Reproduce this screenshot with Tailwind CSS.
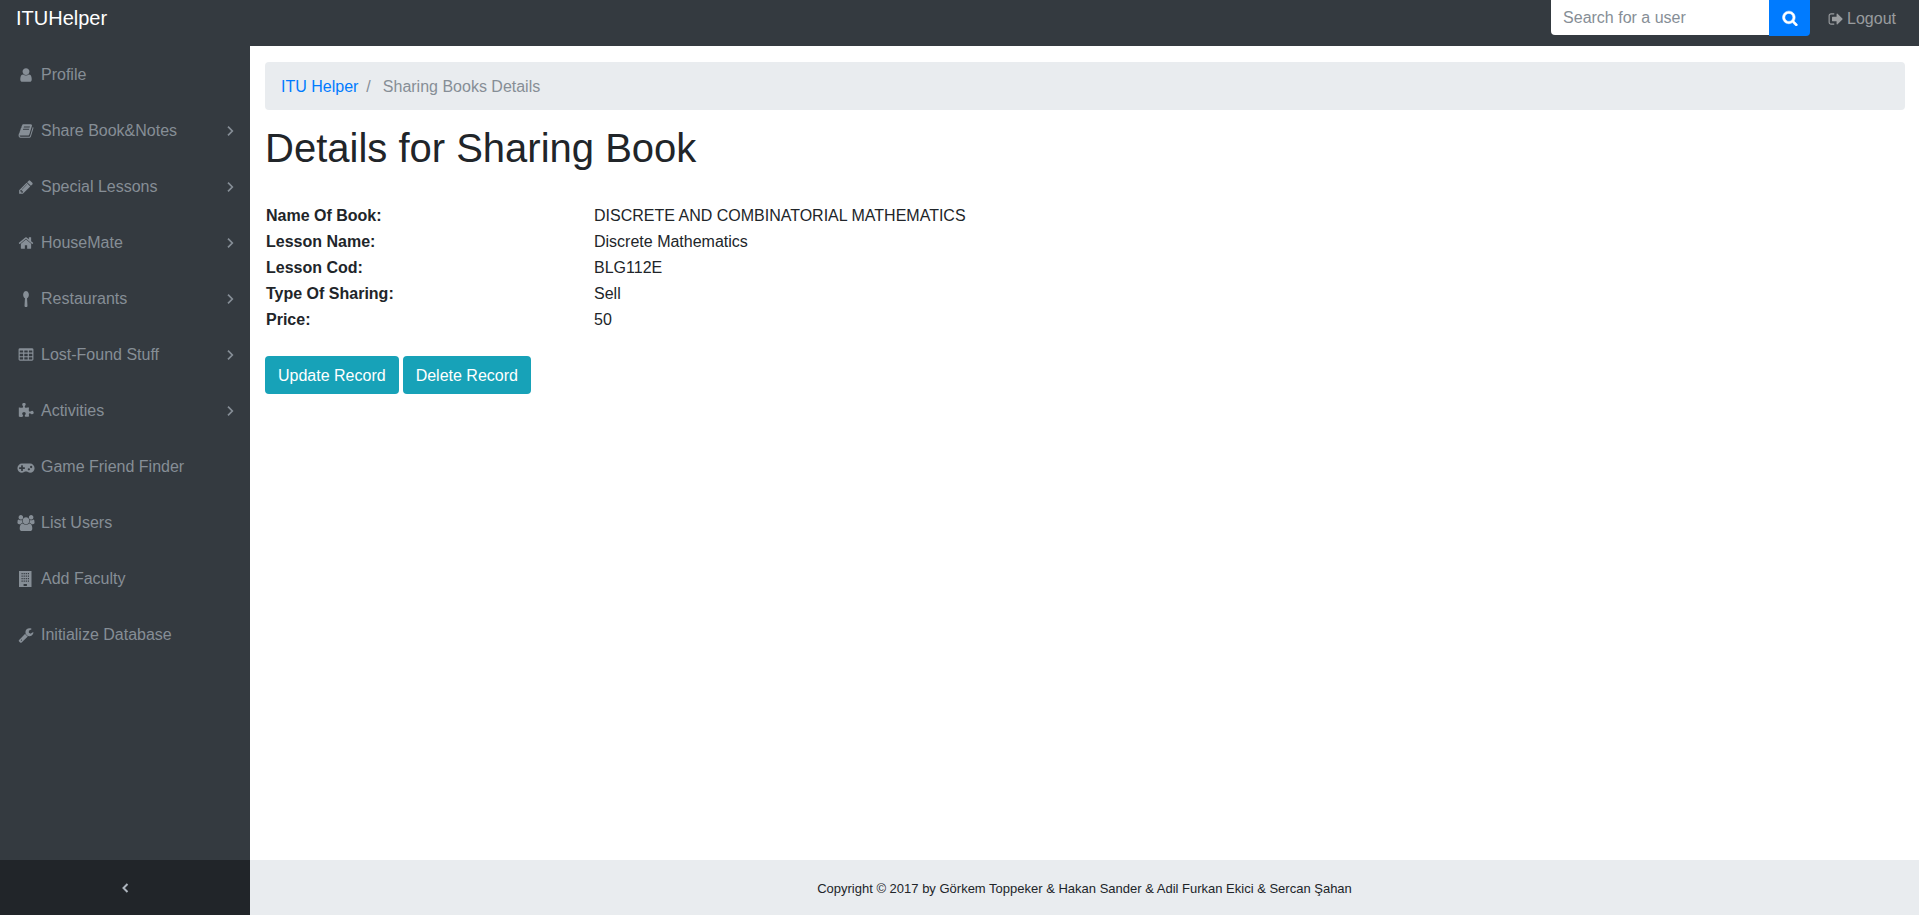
<!DOCTYPE html>
<html lang="en">
<head>
<meta charset="utf-8">
<title>ITUHelper</title>
<script src="https://cdn.jsdelivr.net/npm/@tailwindcss/browser@4"></script>
</head>
<body class="flex min-h-screen flex-col bg-white font-['Liberation_Sans',Arial,sans-serif] text-base text-[#212529]">
<svg class="hidden" aria-hidden="true">
  <symbol id="chev" viewBox="0 0 8 16"><path d="M2 3.700 6.300 8 2 12.300" fill="none" stroke="currentColor" stroke-width="1.700"/></symbol>
</svg>
<header class="flex h-[46px] items-start justify-between bg-[#343a40] pl-4 pr-[23px]">
  <a href="#" class="flex h-9 items-center text-xl text-white">ITUHelper</a>
  <div class="flex items-start">
    <form class="flex items-start">
      <label for="q" class="sr-only">Search for a user</label>
      <input id="q" type="text" placeholder="Search for a user" class="h-[35px] w-[218px] rounded-bl bg-white px-3 placeholder:text-[#868e96]">
      <button type="button" aria-label="Search" class="flex h-9 w-[41px] items-center justify-center rounded-br bg-[#007bff] text-white">
        <svg class="size-4" viewBox="0 0 1792 1792" fill="currentColor" stroke="currentColor" stroke-width="60"><path d="M1216 832q0-185-131.500-316.500t-316.500-131.500-316.500 131.500-131.500 316.500 131.500 316.500 316.500 131.500 316.500-131.500 131.500-316.500zm512 832q0 52-38 90t-90 38q-54 0-90-38l-343-342q-179 124-399 124-143 0-273.500-55.500t-225-150-150-225-55.500-273.500 55.500-273.500 150-225 225-150 273.500-55.500 273.500 55.500 225 150 150 225 55.500 273.500q0 220-124 399l343 343q37 37 37 90z"/></svg>
      </button>
    </form>
    <a href="#" class="ml-[18px] flex h-9 items-center gap-[3px] pt-0.5 text-white/50">
      <svg class="size-4" viewBox="0 0 1792 1792" fill="currentColor"><path d="M704 1440q0 4 1 20t.5 26.500-3 23.500-10 19.500-20.500 6.500h-320q-119 0-203.500-84.500t-84.500-203.500v-704q0-119 84.500-203.500t203.500-84.500h320q13 0 22.500 9.500t9.500 22.500q0 4 1 20t.5 26.500-3 23.500-10 19.500-20.500 6.500h-320q-66 0-113 47t-47 113v704q0 66 47 113t113 47h312l11.500 1 11.500 3 8 5.500 7 9 2 13.500zm928-544q0 26-19 45l-544 544q-19 19-45 19t-45-19-19-45v-288h-448q-26 0-45-19t-19-45v-384q0-26 19-45t45-19h448v-288q0-26 19-45t45-19 45 19l544 544q19 19 19 45z"/></svg>
      <span>Logout</span>
    </a>
  </div>
</header>
<div class="flex flex-1">
  <aside class="flex w-[250px] shrink-0 flex-col bg-[#343a40]">
    <nav class="flex flex-1 flex-col text-[#868e96]">
      <a href="#" class="flex h-14 items-center gap-[5px] px-4 pt-0.5">
        <svg class="h-4 w-5" viewBox="0 0 1792 1792" fill="currentColor"><path d="M1536 1399q0 109-62.500 187t-150.500 78h-854q-88 0-150.500-78t-62.500-187q0-85 8.500-160.500t31.500-152 58.500-131 94-89 134.500-34.500q131 128 313 128t313-128q76 0 134.500 34.500t94 89 58.500 131 31.500 152 8.500 160.500zm-256-887q0 159-112.500 271.500t-271.500 112.500-271.500-112.500-112.500-271.500 112.500-271.500 271.500-112.500 271.500 112.500 112.500 271.500z"/></svg>
        <span>Profile</span>
      </a>
      <a href="#" class="flex h-14 items-center gap-[5px] px-4 pt-0.5">
        <svg class="h-4 w-5" viewBox="0 0 1792 1792" fill="currentColor"><path d="M1703 478q40 57 18 129l-275 906q-19 64-76.500 107.500t-122.500 43.500h-923q-77 0-148.500-53.500t-99.500-131.500q-24-67-2-127 0-4 3-27t4-37q1-8-3-21.500t-3-19.500q2-11 8-21t16.500-23.500 16.500-23.500q23-38 45-91.500t30-91.500q3-10 .5-30t-.5-28q3-11 17-28t17-23q21-36 42-92t25-90q1-9-2.500-32t.5-28q4-13 22-30.500t22-22.500q19-26 42.500-84.500t27.500-96.500q1-8-3-25.500t-2-26.500q2-8 9-18t18-23 17-21q8-12 16.500-30.500t15-35 16-36 19.500-32 26.500-23.500 36-11.500 47.500 5.500l-1 3q38-9 51-9h761q74 0 114 56t18 130l-274 906q-36 119-71.500 153.500t-128.500 34.500h-869q-27 0-38 15-11 16-1 43 24 70 144 70h923q29 0 56-15.500t35-41.500l300-987q7-22 5-57 38 15 59 43zm-1064 2q-4 13 2 22.500t20 9.500h608q13 0 25.500-9.500t16.500-22.500l21-64q4-13-2-22.500t-20-9.500h-608q-13 0-25.500 9.500t-16.500 22.500zm-83 256q-4 13 2 22.500t20 9.500h608q13 0 25.500-9.500t16.500-22.500l21-64q4-13-2-22.500t-20-9.500h-608q-13 0-25.500 9.500t-16.500 22.500z"/></svg>
        <span class="flex-1">Share Book&amp;Notes</span>
        <svg class="h-4 w-2"><use href="#chev"/></svg>
      </a>
      <a href="#" class="flex h-14 items-center gap-[5px] px-4 pt-0.5">
        <svg class="h-4 w-5" viewBox="0 0 1792 1792" fill="currentColor"><path d="M491 1536l91-91-235-235-91 91v107h128v128h107zm523-928q0-22-22-22-10 0-17 7l-542 542q-7 7-7 17 0 22 22 22 10 0 17-7l542-542q7-7 7-17zm-54-192l416 416-832 832h-416v-416zm683 96q0 53-37 90l-166 166-416-416 166-165q36-38 90-38 53 0 91 38l235 234q37 39 37 91z"/></svg>
        <span class="flex-1">Special Lessons</span>
        <svg class="h-4 w-2"><use href="#chev"/></svg>
      </a>
      <a href="#" class="flex h-14 items-center gap-[5px] px-4 pt-0.5">
        <svg class="h-4 w-5" viewBox="0 0 1792 1792" fill="currentColor"><path d="M1472 992v480q0 26-19 45t-45 19h-384v-384h-256v384h-384q-26 0-45-19t-19-45v-480q0-1 .5-3t.5-3l575-474 575 474q1 2 1 6zm223-69l-62 74q-8 9-21 11h-3q-13 0-21-7l-692-577-692 577q-12 8-24 7-13-2-21-11l-62-74q-8-10-7-23.500t11-21.500l719-599q32-26 76-26t76 26l244 204v-195q0-14 9-23t23-9h192q14 0 23 9t9 23v408l219 182q10 8 11 21.500t-7 23.500z"/></svg>
        <span class="flex-1">HouseMate</span>
        <svg class="h-4 w-2"><use href="#chev"/></svg>
      </a>
      <a href="#" class="flex h-14 items-center gap-[5px] px-4 pt-0.5">
        <svg class="h-4 w-5" viewBox="0 0 1792 1792" fill="currentColor"><path d="M1216 432q0 130-56 233t-148 145l50 854q3 53-34 90.500t-90 37.500h-84q-53 0-90-37.500t-34-90.500l50-854q-92-42-148-145t-56-233q0-108 40-209t114-162 166-61 166 61 114 162 40 209z"/></svg>
        <span class="flex-1">Restaurants</span>
        <svg class="h-4 w-2"><use href="#chev"/></svg>
      </a>
      <a href="#" class="flex h-14 items-center gap-[5px] px-4 pt-0.5">
        <svg class="h-4 w-5" viewBox="0 0 1792 1792" fill="currentColor"><path fill-rule="evenodd" d="M224 128h1344q66 0 113 47t47 113v1088q0 66-47 113t-113 47h-1344q-66 0-113-47t-47-113v-1088q0-66 47-113t113-47zM192 416v160q0 32 32 32h320q32 0 32-32v-160q0-32-32-32h-320q-32 0-32 32zM704 416v160q0 32 32 32h320q32 0 32-32v-160q0-32-32-32h-320q-32 0-32 32zM1216 416v160q0 32 32 32h320q32 0 32-32v-160q0-32-32-32h-320q-32 0-32 32zM192 800v192q0 32 32 32h320q32 0 32-32v-192q0-32-32-32h-320q-32 0-32 32zM704 800v192q0 32 32 32h320q32 0 32-32v-192q0-32-32-32h-320q-32 0-32 32zM1216 800v192q0 32 32 32h320q32 0 32-32v-192q0-32-32-32h-320q-32 0-32 32zM192 1184v192q0 32 32 32h320q32 0 32-32v-192q0-32-32-32h-320q-32 0-32 32zM704 1184v192q0 32 32 32h320q32 0 32-32v-192q0-32-32-32h-320q-32 0-32 32zM1216 1184v192q0 32 32 32h320q32 0 32-32v-192q0-32-32-32h-320q-32 0-32 32z"/></svg>
        <span class="flex-1">Lost-Found Stuff</span>
        <svg class="h-4 w-2"><use href="#chev"/></svg>
      </a>
      <a href="#" class="flex h-14 items-center gap-[5px] px-4 pt-0.5">
        <svg class="h-4 w-5" viewBox="0 0 1792 1792" fill="currentColor"><path d="M1755 1082q0 81-44.500 135t-123.500 54q-41 0-77.500-17.500t-59-38-56.500-38-71-17.500q-110 0-110 124 0 39 16 115t15 115v5q-22 0-33 1-34 3-97.500 11.500t-115.500 13.500-98 5q-61 0-103-26.500t-42-83.500q0-37 17.500-71t38-56.500 38-59 17.500-77.500q0-79-54-123.500t-135-44.500q-84 0-143 45.500t-59 127.500q0 43 15 83t33.500 64.500 33.500 53 15 50.500q0 45-46 89-37 35-117 35-95 0-245-24-9-2-27.500-4t-27.500-4l-13-2q-1 0-3-1-2 0-2-1v-1024q2 1 17.500 3.500t34 5 21.500 3.500q150 24 245 24 80 0 117-35 46-44 46-89 0-22-15-50.500t-33.500-53-33.500-64.500-15-83q0-82 59-127.500t144-45.500q80 0 134 44.500t54 123.500q0 41-17.500 77.500t-38 59-38 56.500-17.500 71q0 57 42 83.500t103 26.500q64 0 180-15t163-17v2q-1 2-3.500 17.500t-5 34-3.500 21.500q-24 150-24 245 0 80 35 117 44 46 89 46 22 0 50.500-15t53-33.500 64.500-33.500 83-15q82 0 127.500 59t45.500 143z"/></svg>
        <span class="flex-1">Activities</span>
        <svg class="h-4 w-2"><use href="#chev"/></svg>
      </a>
      <a href="#" class="flex h-14 items-center gap-[5px] px-4 pt-0.5">
        <svg class="h-4 w-5" viewBox="0 0 1920 1792" fill="currentColor"><path fill-rule="evenodd" d="M512 512h896a512 512 0 0 1 0 1024q-192 0-338-128h-220q-146 128-338 128a512 512 0 0 1 0-1024zM832 1088v-128q0-32-32-32h-192v-192q0-32-32-32h-128q-32 0-32 32v192h-192q-32 0-32 32v128q0 32 32 32h192v192q0 32 32 32h128q32 0 32-32v-192h192q32 0 32-32zM1408 1152a128 128 0 0 0-256 0a128 128 0 0 0 256 0zM1664 896a128 128 0 0 0-256 0a128 128 0 0 0 256 0z"/></svg>
        <span>Game Friend Finder</span>
      </a>
      <a href="#" class="flex h-14 items-center gap-[5px] px-4 pt-0.5">
        <svg class="h-4 w-5" viewBox="0 0 1920 1792" fill="currentColor"><path d="M593 896q-162 5-265 128h-134q-82 0-138-40.500t-56-118.500q0-353 124-353 6 0 43.500 21t97.500 42.500 119 21.500q67 0 133-23-5 37-5 66 0 139 81 256zm1071 637q0 120-73 189.500t-194 69.500h-874q-121 0-194-69.500t-73-189.500q0-53 3.500-103.500t14-109 26.500-108.500 43-97.500 62-81 85.500-53.500 111.500-20q10 0 43 21.500t73 48 107 48 135 21.500 135-21.500 107-48 73-48 43-21.500q61 0 111.500 20t85.500 53.500 62 81 43 97.500 26.500 108.500 14 109 3.500 103.500zm-1024-1277q0 106-75 181t-181 75-181-75-75-181 75-181 181-75 181 75 75 181zm704 384q0 159-112.500 271.500t-271.500 112.500-271.500-112.500-112.500-271.500 112.500-271.500 271.500-112.500 271.500 112.500 112.500 271.500zm576 225q0 78-56 118.500t-138 40.500h-134q-103-123-265-128 81-117 81-256 0-29-5-66 66 23 133 23 59 0 119-21.500t97.500-42.500 43.500-21q124 0 124 353zm-128-609q0 106-75 181t-181 75-181-75-75-181 75-181 181-75 181 75 75 181z"/></svg>
        <span>List Users</span>
      </a>
      <a href="#" class="flex h-14 items-center gap-[5px] px-4 pt-0.5">
        <svg class="h-4 w-5" viewBox="0 0 16 16" fill="currentColor"><path fill-rule="evenodd" d="M1 0h12.500v16H1zM3.500 2v1.200h1.200V2zm2.100 0v1.200h1.200V2zm2.100 0v1.200h1.200V2zm2.100 0v1.200H11V2zM3.500 4.500v1.200h1.200V4.500zm2.100 0v1.200h1.200V4.500zm2.100 0v1.200h1.200V4.500zm2.100 0v1.200H11V4.500zM3.500 7v1.200h1.200V7zm2.100 0v1.200h1.200V7zm2.100 0v1.200h1.200V7zm2.100 0v1.200H11V7zM3.500 9.500v1.200h1.200V9.500zm2.100 0v1.200h1.200V9.500zm2.100 0v1.200h1.200V9.500zm2.100 0v1.200H11V9.500zM5.600 13v2h3.300v-2z"/></svg>
        <span>Add Faculty</span>
      </a>
      <a href="#" class="flex h-14 items-center gap-[5px] px-4 pt-0.5">
        <svg class="h-4 w-5" viewBox="0 0 1792 1792" fill="currentColor"><path d="M448 1472q0-26-19-45t-45-19-45 19-19 45 19 45 45 19 45-19 19-45zm644-420l-682 682q-37 37-90 37-52 0-91-37l-106-108q-38-36-38-90 0-53 38-91l681-681q39 98 114.500 173.500t173.500 114.500zm634-435q0 39-23 106-47 134-164.500 217.500t-258.500 83.500q-185 0-316.500-131.500t-131.500-316.500 131.500-316.500 316.500-131.500q58 0 121.500 16.500t107.500 46.500q16 11 16 28t-16 28l-293 169v224l193 107q5-3 79-48.500t135.500-81 70.500-35.500q15 0 23.500 10t8.500 25z"/></svg>
        <span>Initialize Database</span>
      </a>
    </nav>
    <button type="button" aria-label="Collapse sidebar" class="flex h-[55px] items-center justify-center bg-[#212529] text-[#adb5bd]">
      <svg class="h-4 w-2" viewBox="0 0 8 16" fill="none" stroke="currentColor" stroke-width="2"><path d="M6.500 4 2.500 8l4 4"/></svg>
    </button>
  </aside>
  <div class="flex min-w-0 flex-1 flex-col">
    <main class="flex-1 pl-[15px] pr-3.5 pt-4">
      <nav aria-label="Breadcrumb" class="flex h-12 items-center rounded bg-[#e9ecef] px-4 pt-0.5 text-[#868e96]">
        <a href="#" class="text-[#007bff]">ITU Helper</a>
        <span class="pl-2 pr-3">/</span>
        <span>Sharing Books Details</span>
      </nav>
      <h1 class="mt-4 text-[40px] leading-[44px]">Details for Sharing Book</h1>
      <table class="mt-[33px] w-full table-fixed text-left">
        <tbody>
          <tr><th scope="row" class="w-1/5 p-px">Name Of Book:</th><td class="p-px">DISCRETE AND COMBINATORIAL MATHEMATICS</td></tr>
          <tr><th scope="row" class="p-px">Lesson Name:</th><td class="p-px">Discrete Mathematics</td></tr>
          <tr><th scope="row" class="p-px">Lesson Cod:</th><td class="p-px">BLG112E</td></tr>
          <tr><th scope="row" class="p-px">Type Of Sharing:</th><td class="p-px">Sell</td></tr>
          <tr><th scope="row" class="p-px">Price:</th><td class="p-px">50</td></tr>
        </tbody>
      </table>
      <div class="mt-[23px] flex gap-1 text-white">
        <button type="button" class="h-[38px] rounded bg-[#17a2b8] px-[13px] pt-0.5">Update Record</button>
        <button type="button" class="h-[38px] rounded bg-[#17a2b8] px-[13px] pt-0.5">Delete Record</button>
      </div>
    </main>
    <footer class="flex h-[55px] items-center justify-center bg-[#e9ecef] pt-0.5 text-[13px]">Copyright © 2017 by Görkem Toppeker &amp; Hakan Sander &amp; Adil Furkan Ekici &amp; Sercan Şahan</footer>
  </div>
</div>
</body>
</html>
